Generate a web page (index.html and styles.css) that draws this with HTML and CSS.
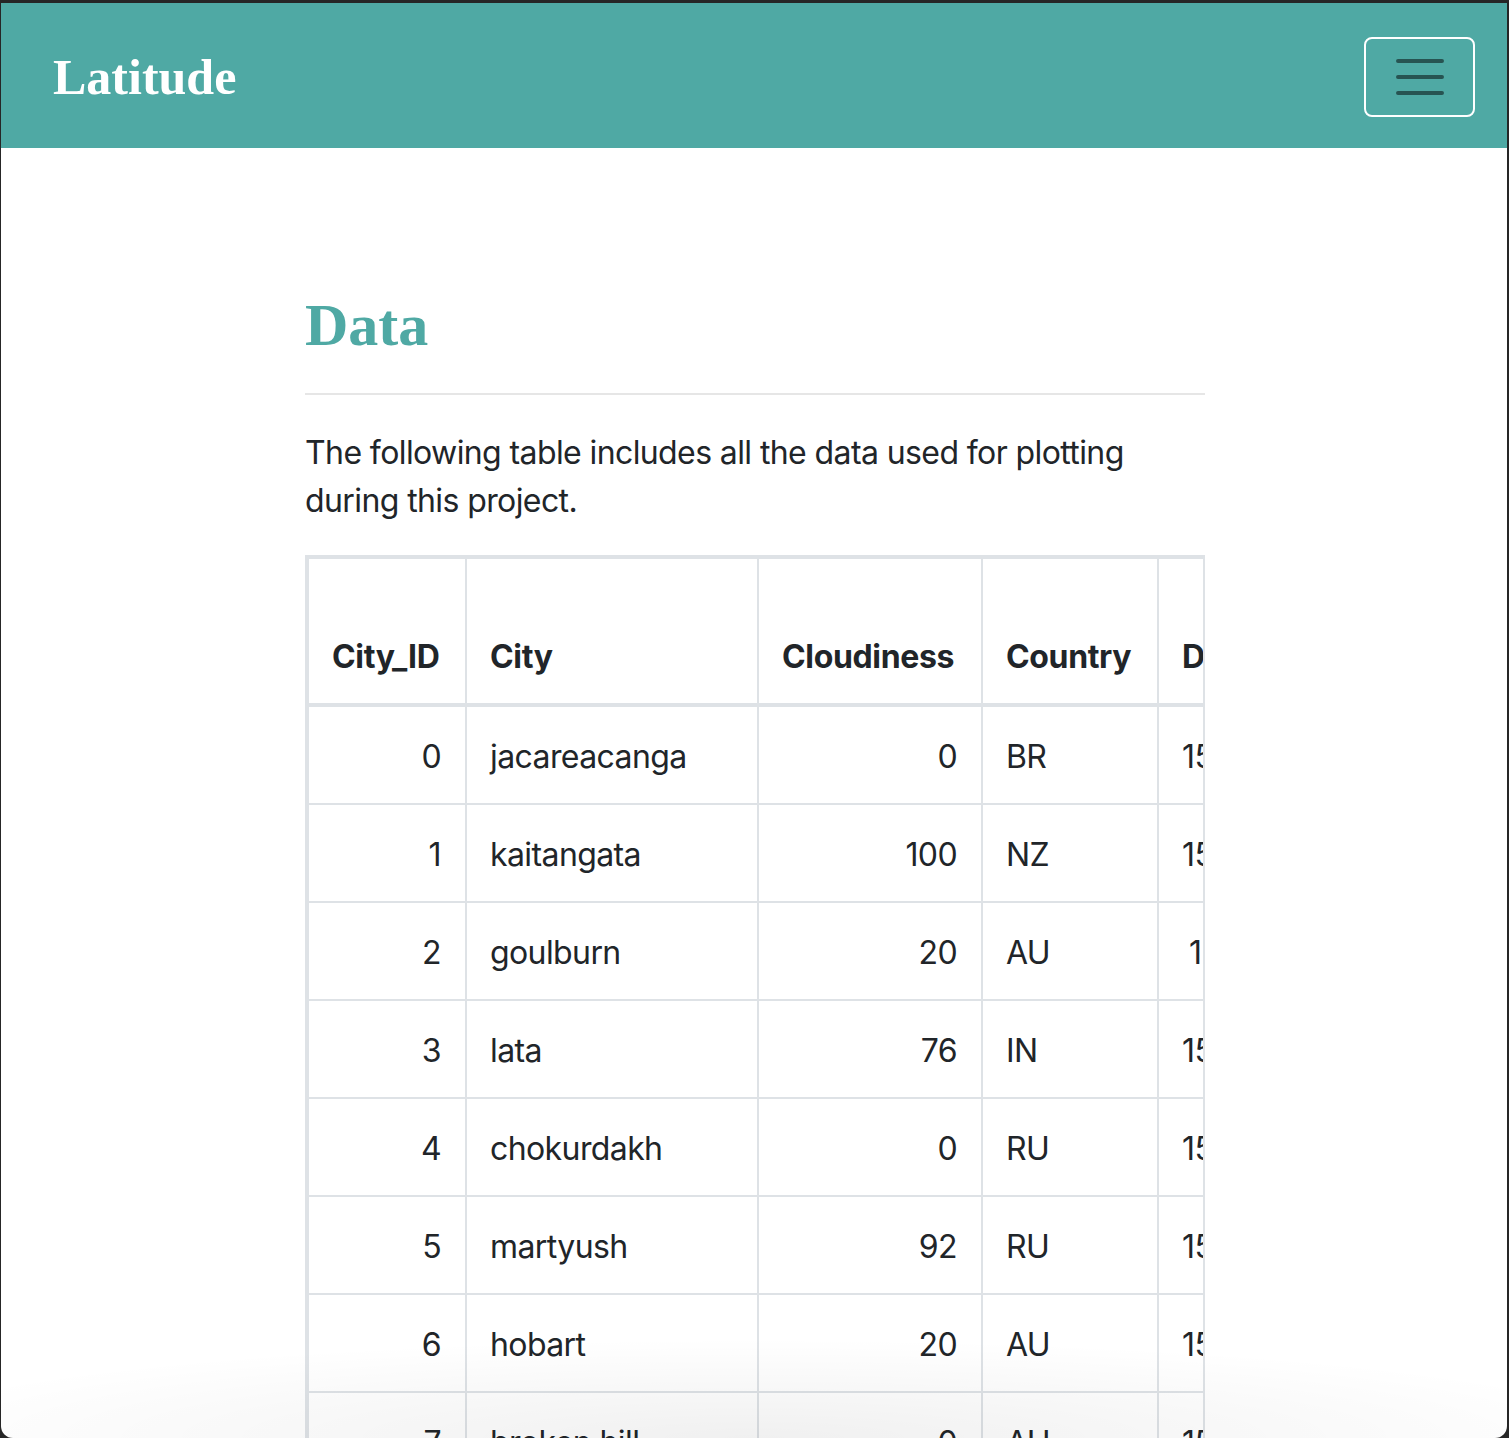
FILE: index.html
```html
<!DOCTYPE html>
<html lang="en">
<head>
<meta charset="utf-8">
<title>Latitude - Data</title>
<link rel="stylesheet" href="styles.css">
</head>
<body>
<div class="window">
  <nav class="navbar">
    <a class="brand" href="#">Latitude</a>
    <button class="toggler" type="button" aria-label="Toggle navigation">
      <svg class="toggler-icon" width="48" height="36" viewBox="0 0 48 36">
        <path d="M2 2H46M2 18H46M2 34H46" stroke="rgba(0,0,0,0.5)" stroke-width="4" stroke-linecap="round" fill="none"/>
      </svg>
    </button>
  </nav>

  <main class="container">
    <h1 class="title">Data</h1>
    <hr class="rule">
    <p class="intro">The following table includes all the data used for plotting during this project.</p>

    <div class="table-wrap">
      <table class="data">
        <thead>
          <tr>
            <th class="c-id">City_ID</th>
            <th class="c-city">City</th>
            <th class="c-cloud">Cloudiness</th>
            <th class="c-country">Country</th>
            <th class="c-date">Date</th>
            <th class="c-hum">Humidity</th>
            <th class="c-lat">Lat</th>
            <th class="c-lng">Lng</th>
            <th class="c-temp">Max Temp</th>
            <th class="c-wind">Wind Speed</th>
          </tr>
        </thead>
        <tbody>
          <tr><td class="num">0</td><td>jacareacanga</td><td class="num">0</td><td>BR</td><td class="num">1558378754</td><td class="num">62</td><td class="num">-6.22</td><td class="num">-57.76</td><td class="num">89.05</td><td class="num">2.17</td></tr>
          <tr><td class="num">1</td><td>kaitangata</td><td class="num">100</td><td>NZ</td><td class="num">1558378755</td><td class="num">94</td><td class="num">-46.28</td><td class="num">169.85</td><td class="num">42.01</td><td class="num">4.25</td></tr>
          <tr><td class="num">2</td><td>goulburn</td><td class="num">20</td><td>AU</td><td class="num">1558378111</td><td class="num">62</td><td class="num">-34.75</td><td class="num">149.72</td><td class="num">48.20</td><td class="num">6.93</td></tr>
          <tr><td class="num">3</td><td>lata</td><td class="num">76</td><td>IN</td><td class="num">1558378756</td><td class="num">100</td><td class="num">30.78</td><td class="num">78.62</td><td class="num">58.59</td><td class="num">1.14</td></tr>
          <tr><td class="num">4</td><td>chokurdakh</td><td class="num">0</td><td>RU</td><td class="num">1558378757</td><td class="num">82</td><td class="num">70.62</td><td class="num">147.90</td><td class="num">21.17</td><td class="num">3.04</td></tr>
          <tr><td class="num">5</td><td>martyush</td><td class="num">92</td><td>RU</td><td class="num">1558378757</td><td class="num">68</td><td class="num">56.40</td><td class="num">61.87</td><td class="num">46.40</td><td class="num">6.71</td></tr>
          <tr><td class="num">6</td><td>hobart</td><td class="num">20</td><td>AU</td><td class="num">1558378758</td><td class="num">71</td><td class="num">-42.88</td><td class="num">147.33</td><td class="num">51.80</td><td class="num">10.29</td></tr>
          <tr><td class="num">7</td><td>broken hill</td><td class="num">0</td><td>AU</td><td class="num">1558378759</td><td class="num">87</td><td class="num">-31.97</td><td class="num">141.43</td><td class="num">45.32</td><td class="num">2.49</td></tr>
        </tbody>
      </table>
    </div>
  </main>

  <div class="shade"></div>
</div>
</body>
</html>
```

FILE: styles.css
```css
html, body {
  margin: 0;
  padding: 0;
}

body {
  background: #262626;
  height: 1438px;
  overflow: hidden;
  font-family: Inter, "Noto Sans", "DejaVu Sans", sans-serif;
  color: #212529;
}

.window {
  position: relative;
  margin: 3px 2px 0 1px;
  height: 1435px;
  background: #ffffff;
  border-radius: 0 0 12px 12px;
  overflow: hidden;
}

/* ---------- navbar ---------- */
.navbar {
  height: 145px;
  box-sizing: border-box;
  background: #4fa9a4;
  display: flex;
  align-items: center;
  justify-content: space-between;
  padding: 0 33px 0 52px;
}

.brand {
  font-family: "Liberation Serif", "Times New Roman", serif;
  font-weight: 700;
  font-size: 50px;
  line-height: 60px;
  color: #ffffff;
  text-decoration: none;
  margin-top: 2px;
}

.toggler {
  width: 111px;
  height: 80px;
  box-sizing: border-box;
  border: 2px solid #ffffff;
  border-radius: 8px;
  background: transparent;
  display: flex;
  align-items: center;
  justify-content: center;
  padding: 0;
  margin-top: 2px;
  margin-right: -1px;
}

.toggler-icon {
  display: block;
}

/* ---------- content ---------- */
.container {
  width: 900px;
  margin: 0 auto;
  padding: 141px 0 0 2px;
}

.title {
  margin: 0 0 32px;
  font-family: "Liberation Serif", "Times New Roman", serif;
  font-weight: 700;
  font-size: 60px;
  line-height: 72px;
  color: #4fa9a4;
}

.rule {
  margin: 0 0 32px;
  border: 0;
  border-top: 2px solid #e6e6e6;
  height: 0;
}

.intro {
  margin: 0 0 30px;
  padding-top: 2px;
  font-size: 32px;
  line-height: 48px;
  letter-spacing: -0.6px;
}

/* ---------- table ---------- */
.table-wrap {
  border: 2px solid #dee2e6;
  overflow: hidden;
}

.data {
  border-collapse: separate;
  border-spacing: 0;
  table-layout: fixed;
  width: 2060px;
  font-size: 32px;
  line-height: 48px;
}

.data th,
.data td {
  box-sizing: border-box;
  padding: 26px 24px 22px 23px;
  border-right: 2px solid #dee2e6;
  border-bottom: 2px solid #dee2e6;
  white-space: normal;
}

.data th:first-child,
.data td:first-child {
  border-left: 2px solid #dee2e6;
}

.data thead th {
  border-top: 2px solid #dee2e6;
  border-bottom-width: 4px;
  vertical-align: bottom;
  text-align: left;
  font-weight: 700;
  letter-spacing: -0.35px;
}

.data td {
  vertical-align: top;
  text-align: left;
  letter-spacing: -0.6px;
}

.data td.num {
  text-align: right;
}

.c-id { width: 160px; }
.c-city { width: 292px; }
.c-cloud { width: 224px; }
.c-country { width: 176px; }
.c-date { width: 218px; }
.c-hum { width: 200px; }
.c-lat { width: 180px; }
.c-lng { width: 180px; }
.c-temp { width: 160px; }
.c-wind { width: 270px; }

/* soft shadow fading in at the bottom of the window */
.shade {
  position: absolute;
  left: 0;
  right: 0;
  bottom: 0;
  height: 100px;
  pointer-events: none;
  background: radial-gradient(ellipse 60% 100% at 50% 100%, rgba(0, 0, 0, 0.06), rgba(0, 0, 0, 0) 100%);
}
```
